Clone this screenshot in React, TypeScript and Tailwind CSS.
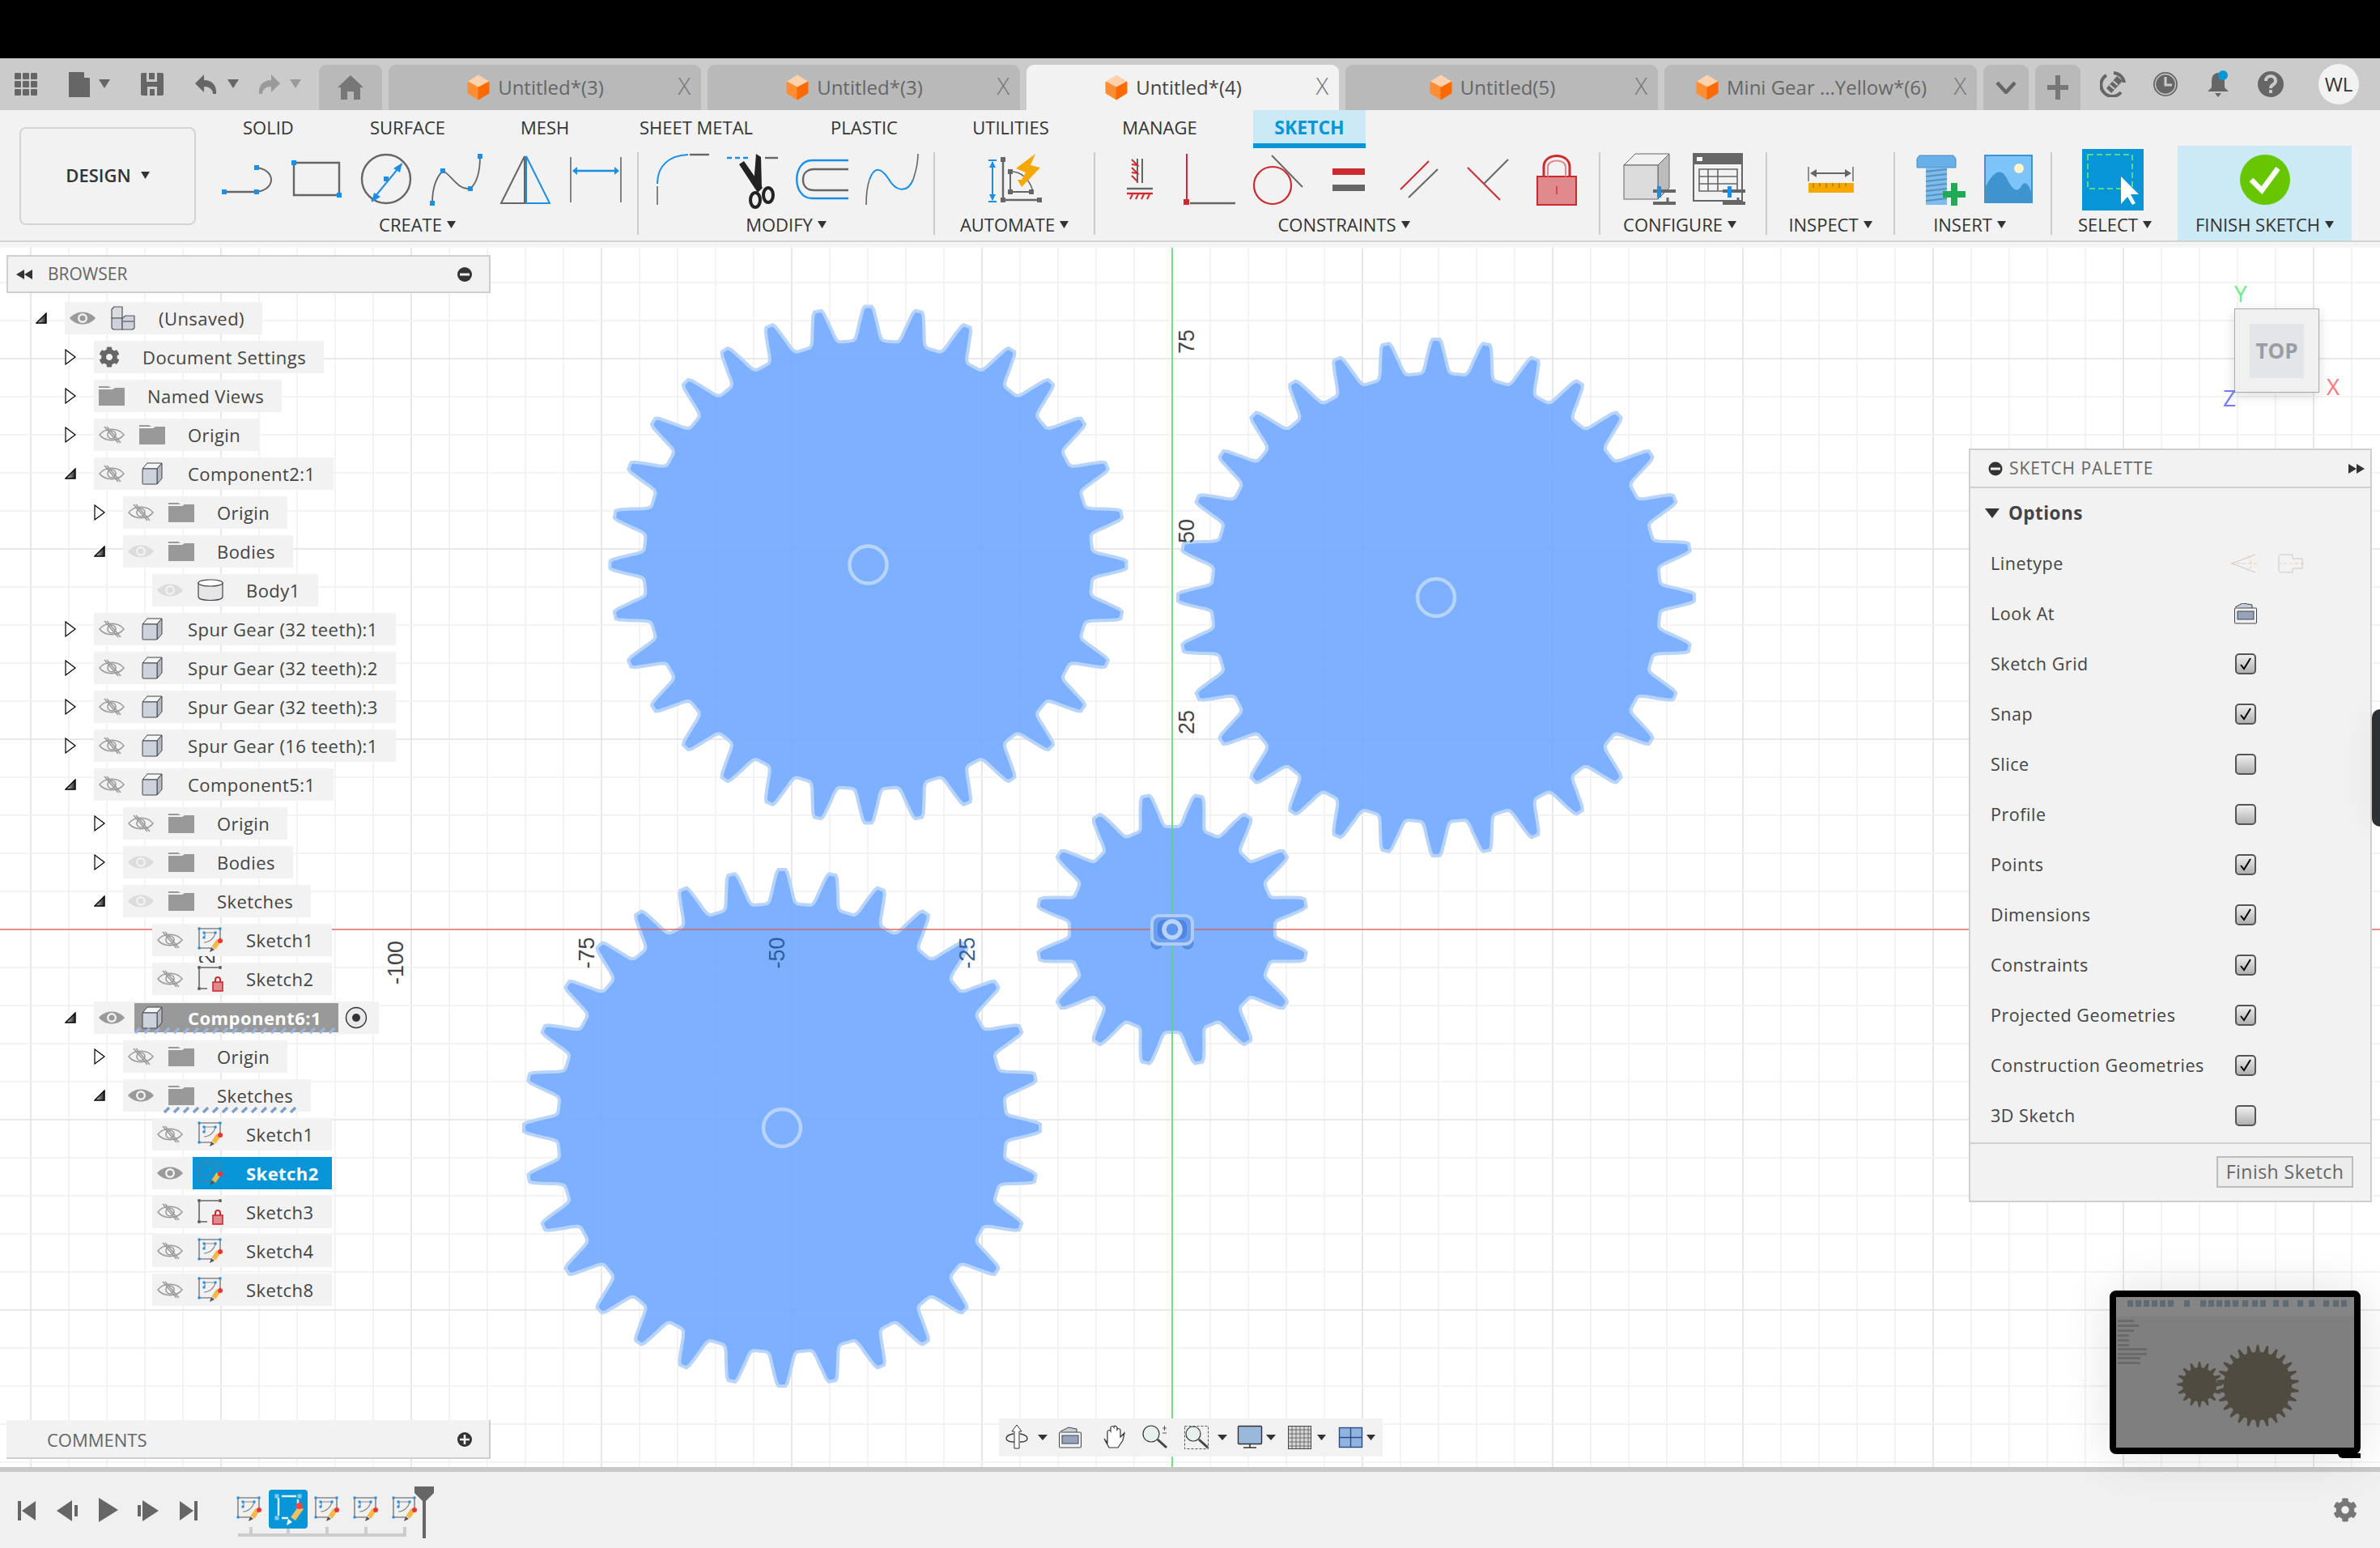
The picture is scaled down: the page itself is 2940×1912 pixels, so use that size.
import React from "react";
import { FaCog } from "react-icons/fa";

const gearPath = (cx: number, cy: number, n: number, rt: number, rr: number, phase: number) => {
  const half: [number, number][] = [[0.07, 1], [0.11, 0.9], [0.16, 0.65], [0.21, 0.4], [0.25, 0.2], [0.29, 0.07], [0.34, 0.012], [0.42, 0]];
  const prof: [number, number][] = [[-0.5, 0], ...[...half].reverse().map(([a, t]) => [-a, t] as [number, number]), ...half];
  const pts: string[] = [];
  for (let i = 0; i < n; i++) {
    for (const [a, t] of prof) {
      const ang = ((i + phase + a) / n) * Math.PI * 2;
      const r = rr + (rt - rr) * t;
      pts.push(`${(cx + r * Math.sin(ang)).toFixed(1)},${(cy - r * Math.cos(ang)).toFixed(1)}`);
    }
  }
  return "M" + pts.join("L") + "Z";
};

const H = ({ x, y, s = 6, c = "#1a8fe8" }: { x: number; y: number; s?: number; c?: string }) => <rect x={x - s / 2} y={y - s / 2} width={s} height={s} fill={c} />;
const G = "#666666";
const B = "#1a8fe8";
const R = "#cc2a2e";

const Caret = ({ cls = "ml-[6px]" }: { cls?: string }) => (
  <svg width="11" height="11" viewBox="0 0 11 11" className={`${cls} shrink-0`}><path d="M0 1h11L5.5 10z" fill="#333" /></svg>
);

const Strip = ({ x, w, children }: { x: number; w: number; children?: React.ReactNode }) => (
  <svg width={w} height={82} viewBox={`${x} 180 ${w} 82`} className="block shrink-0">{children}</svg>
);

const Group = ({ x, w, cls, label, caret = true, lblCls = "", children }: { x: number; w: number; cls: string; label: string; caret?: boolean; lblCls?: string; children?: React.ReactNode }) => (
  <div className={`flex flex-col shrink-0 h-full ${cls}`}>
    <Strip x={x} w={w}>{children}</Strip>
    <div className={`flex items-center justify-center h-[30px] text-[22px] text-[#333] whitespace-nowrap ${lblCls}`}>
      {label}
      {caret && <Caret />}
    </div>
  </div>
);

const Sep = () => <div className="w-[2px] h-[102px] bg-[#cccccc] shrink-0 self-center" />;

const Cube = () => (
  <svg width="30" height="32" viewBox="0 0 28 32" className="shrink-0">
    <path d="M14 1L27 9L14 16L1 9Z" fill="#ffd2ad" stroke="#ffd2ad" strokeLinejoin="round" />
    <path d="M1 9L14 16V31L1 23Z" fill="#ff8d33" stroke="#ff8d33" strokeLinejoin="round" />
    <path d="M27 9L14 16V31L27 23Z" fill="#ff6a00" stroke="#ff6a00" strokeLinejoin="round" />
  </svg>
);

const Tab = ({ label, active }: { label: string; active?: boolean }) => (
  <div className={`relative w-[386px] h-[56px] rounded-t-[9px] flex items-center justify-center gap-[9px] pr-[24px] text-[24px] shrink-0 ${active ? "bg-[#f2f2f2] text-[#444]" : "bg-[#b9b9b9] text-[#666]"}`}>
    <Cube />
    <span className="whitespace-nowrap">{label}</span>
    <span className="absolute right-[13px] top-[9px] text-[29px] font-light text-[#777] leading-[34px]">X</span>
  </div>
);

const SketchGlyph = ({ line = "#888", handle = "#1a8fe8" }: { line?: string; handle?: string }) => (
  <g>
    <path d="M3 2H27M2 3V25M3 26H17M28 3V16" stroke={line} strokeWidth="1.6" fill="none" />
    <H x={2} y={2} s={3} c={handle} /><H x={28} y={2} s={3} c={handle} /><H x={2} y={26} s={3} c={handle} />
    <path d="M9 7H21M9 8V12" stroke={line} strokeWidth="1.2" fill="none" />
    <H x={8} y={7} s={3} c={handle} /><H x={22} y={7} s={3} c={handle} /><H x={8} y={13} s={3} c={handle} />
    <path d="M8 19C15 19 20 14 22 8" stroke={line} strokeWidth="1.2" fill="none" />
    <path d="M26 17L20 26" stroke="#f5b84a" strokeWidth="6" />
    <circle cx="28" cy="17" r="3" fill="#ee3333" />
    <path d="M17 25L21 28L15 31Z" fill="#555" />
  </g>
);

const SketchIcon = () => <svg width="32" height="32" viewBox="0 0 32 32" className="shrink-0"><SketchGlyph /></svg>;

const SelectedSketchIcon = () => (
  <svg width="32" height="32" viewBox="0 0 32 32" className="shrink-0">
    <path d="M3 2H27M2 3V25M3 26H17M28 3V16" stroke="#4a7fa8" strokeWidth="1.6" fill="none" />
    <path d="M9 7H21M9 8V12M8 19C15 19 20 14 22 8" stroke="#4a7fa8" strokeWidth="1.2" fill="none" />
    <path d="M26 17L20 26" stroke="#f5b84a" strokeWidth="6" />
    <circle cx="28" cy="17" r="3" fill="#ee3333" />
    <path d="M17 25L21 28L15 31Z" fill="#555" />
  </svg>
);

const LockSketchIcon = () => (
  <svg width="32" height="32" viewBox="0 0 32 32" className="shrink-0">
    <path d="M4 2H26M2 4V26M4 28H12" stroke="#666" strokeWidth="1.6" fill="none" />
    <H x={2} y={2} s={3.5} c="#555" /><H x={28} y={2} s={3.5} c="#555" /><H x={2} y={28} s={3.5} c="#555" />
    <rect x="19" y="20" width="12" height="11" fill="#e08a8e" stroke="#cc2a2e" strokeWidth="1.6" />
    <path d="M22 20V17A3 3 0 0 1 28 17V20" stroke="#cc2a2e" strokeWidth="2" fill="none" />
  </svg>
);

const Eye = ({ c = "#9a9a9a" }: { c?: string }) => (
  <svg width="32" height="20" viewBox="0 0 32 20" className="shrink-0">
    <path d="M0 10C8 0 24 0 32 10C24 20 8 20 0 10Z" fill={c} />
    <circle cx="16" cy="10" r="6" fill="#f2f2f2" />
    <circle cx="16" cy="10" r="3.6" fill={c} />
  </svg>
);
const EyeOff = () => (
  <svg width="32" height="22" viewBox="0 0 32 22" className="shrink-0" fill="none" stroke="#9a9a9a" strokeWidth="1.6">
    <path d="M1 11C8 2 24 2 31 11C24 20 8 20 1 11Z" />
    <circle cx="16" cy="11" r="5" />
    <path d="M7 1L24 21M10 1L27 21" />
  </svg>
);
const Folder = () => (
  <svg width="32" height="24" viewBox="0 0 32 24" className="shrink-0">
    <path d="M0 0H12L15 2H0Z" fill="#999" />
    <path d="M0 4H17L20 2H32V24H0Z" fill="#999" />
  </svg>
);
const CompCube = () => (
  <svg width="28" height="28" viewBox="0 0 28 28" className="shrink-0" stroke="#444" strokeWidth="1" strokeLinejoin="round">
    <path d="M2 8L8 1H26L20 8Z" fill="#f4f5f7" />
    <path d="M20 8L26 1V20L20 27Z" fill="#b4bac6" />
    <rect x="2" y="8" width="18" height="19" fill="#cdd2dc" rx="1" />
  </svg>
);
const BodyIcon = () => (
  <svg width="32" height="28" viewBox="0 0 32 28" className="shrink-0" stroke="#444" strokeWidth="1.2">
    <path d="M1 5V22C1 28 31 28 31 22V5Z" fill="#e6e6e8" />
    <ellipse cx="16" cy="5" rx="15" ry="4" fill="#ffffff" />
  </svg>
);
const RootIcon = () => (
  <svg width="30" height="30" viewBox="0 0 30 30" className="shrink-0" stroke="#555" strokeWidth="1.2" strokeLinejoin="round">
    <path d="M1 4L4 1H14V15H1Z" fill="#d9dce3" />
    <path d="M1 15H14V29H3L1 27Z" fill="#cdd2dc" />
    <path d="M14 15L18 12H29V27L27 29H14Z" fill="#cdd2dc" />
    <path d="M15 19H28" />
  </svg>
);

const TriOpen = () => (
  <svg width="14" height="14" viewBox="0 0 14 14"><defs><linearGradient id="triG" x1="0" x2="1" y1="0" y2="0"><stop offset="0" stopColor="#ddd" /><stop offset="1" stopColor="#222" /></linearGradient></defs><path d="M1 13L13 1V13Z" fill="url(#triG)" stroke="#000" strokeWidth="1.4" /></svg>
);
const TriClosed = () => (
  <svg width="14" height="20" viewBox="0 0 14 20"><path d="M1 1L13 10L1 19Z" fill="#fff" stroke="#000" strokeWidth="1.2" /></svg>
);

type RowT = { lvl: number; tri?: "o" | "c"; eye?: "on" | "off" | "dim"; icon: React.ReactNode; label: string; hl?: "comp" | "sketch" | "hatch" };

const rows: RowT[] = [
  { lvl: 0, tri: "o", eye: "on", icon: <RootIcon />, label: "(Unsaved)" },
  { lvl: 1, tri: "c", icon: <FaCog className="text-[#666] text-[26px] shrink-0" />, label: "Document Settings" },
  { lvl: 1, tri: "c", icon: <Folder />, label: "Named Views" },
  { lvl: 1, tri: "c", eye: "off", icon: <Folder />, label: "Origin" },
  { lvl: 1, tri: "o", eye: "off", icon: <CompCube />, label: "Component2:1" },
  { lvl: 2, tri: "c", eye: "off", icon: <Folder />, label: "Origin" },
  { lvl: 2, tri: "o", eye: "dim", icon: <Folder />, label: "Bodies" },
  { lvl: 3, eye: "dim", icon: <BodyIcon />, label: "Body1" },
  { lvl: 1, tri: "c", eye: "off", icon: <CompCube />, label: "Spur Gear (32 teeth):1" },
  { lvl: 1, tri: "c", eye: "off", icon: <CompCube />, label: "Spur Gear (32 teeth):2" },
  { lvl: 1, tri: "c", eye: "off", icon: <CompCube />, label: "Spur Gear (32 teeth):3" },
  { lvl: 1, tri: "c", eye: "off", icon: <CompCube />, label: "Spur Gear (16 teeth):1" },
  { lvl: 1, tri: "o", eye: "off", icon: <CompCube />, label: "Component5:1" },
  { lvl: 2, tri: "c", eye: "off", icon: <Folder />, label: "Origin" },
  { lvl: 2, tri: "c", eye: "dim", icon: <Folder />, label: "Bodies" },
  { lvl: 2, tri: "o", eye: "dim", icon: <Folder />, label: "Sketches" },
  { lvl: 3, eye: "off", icon: <SketchIcon />, label: "Sketch1" },
  { lvl: 3, eye: "off", icon: <LockSketchIcon />, label: "Sketch2" },
  { lvl: 1, tri: "o", eye: "on", icon: <CompCube />, label: "Component6:1", hl: "comp" },
  { lvl: 2, tri: "c", eye: "off", icon: <Folder />, label: "Origin" },
  { lvl: 2, tri: "o", eye: "on", icon: <Folder />, label: "Sketches", hl: "hatch" },
  { lvl: 3, eye: "off", icon: <SketchIcon />, label: "Sketch1" },
  { lvl: 3, eye: "on", icon: <SelectedSketchIcon />, label: "Sketch2", hl: "sketch" },
  { lvl: 3, eye: "off", icon: <LockSketchIcon />, label: "Sketch3" },
  { lvl: 3, eye: "off", icon: <SketchIcon />, label: "Sketch4" },
  { lvl: 3, eye: "off", icon: <SketchIcon />, label: "Sketch8" },
];

const lvlCls = ["ml-[44px]", "ml-[80px]", "ml-[116px]", "ml-[152px]"];

const Hatch = ({ w, c }: { w: number; c: string }) => {
  const segs = Array.from({ length: Math.floor(w / 12) }, (_, i) => `M${i * 12 + 1} 7L${i * 12 + 7} 1`).join("");
  return (
    <svg width={w} height="8" viewBox={`0 0 ${w} 8`} className="absolute left-0 bottom-[-2px]">
      <path d={segs} stroke={c} strokeWidth="3.4" fill="none" />
    </svg>
  );
};

const TreeRow = ({ r }: { r: RowT }) => {
  const eye = r.eye === "on" ? <Eye /> : r.eye === "off" ? <EyeOff /> : r.eye === "dim" ? <Eye c="#dcdcdc" /> : null;
  const text = "text-[22px] tracking-[0.02em] whitespace-nowrap";
  const slot = <div className="w-[32px] mr-[18px] flex justify-center shrink-0">{r.icon}</div>;
  let body: React.ReactNode;
  if (r.hl === "comp") {
    body = (
      <>
        <div className="pl-[6px] pr-[12px] shrink-0">{eye}</div>
        <div className="relative flex items-center h-[36px] w-[252px] bg-[#999] pl-[6px]">
          {slot}
          <span className={`${text} font-bold text-white ml-[10px]`}>{r.label}</span>
          <Hatch w={252} c="#9db4dc" />
        </div>
        <svg width="28" height="28" viewBox="0 0 28 28" className="ml-[8px] mr-[14px] shrink-0"><circle cx="14" cy="14" r="12.5" fill="#e8e8ea" stroke="#333" strokeWidth="1.4" /><circle cx="14" cy="14" r="5" fill="#333" /></svg>
      </>
    );
  } else if (r.hl === "sketch") {
    body = (
      <>
        <div className="pl-[6px] pr-[12px] shrink-0">{eye}</div>
        <div className="flex items-center h-full w-[172px] bg-[#0696d7] pl-[6px]">
          {slot}
          <span className={`${text} font-bold text-white ml-[10px]`}>{r.label}</span>
        </div>
      </>
    );
  } else {
    const plain = !r.eye;
    body = (
      <>
        {eye && <div className="pl-[6px] pr-[18px] shrink-0">{eye}</div>}
        {plain ? <div className="pl-[6px] pr-[18px] flex shrink-0">{r.icon}</div> : slot}
        <span className={`${text} text-[#444] ml-[10px] pr-[22px]`}>{r.label}</span>
        {r.hl === "hatch" && <div className="absolute left-[50px] bottom-0"><Hatch w={176} c="#7f9ccc" /></div>}
      </>
    );
  }
  return (
    <div className={`flex items-center h-[40px] ${lvlCls[r.lvl]}`}>
      <div className="w-[36px] flex items-center shrink-0">{r.tri === "o" ? <TriOpen /> : r.tri === "c" ? <TriClosed /> : null}</div>
      <div className="relative flex items-center h-full bg-[#f2f2f2]">{body}</div>
    </div>
  );
};

const PaletteRow = ({ label, check, children }: { label: string; check?: boolean | null; children?: React.ReactNode }) => (
  <div className="flex items-center h-[62px] pl-[25px]">
    <span className="w-[302px] text-[21.5px] tracking-[0.025em] text-[#444] whitespace-nowrap shrink-0">{label}</span>
    {check === true || check === false ? (
      <div className="w-[26px] h-[26px] rounded-[5px] border-2 border-[#555] bg-gradient-to-b from-[#f0f0f0] to-[#b0b0b0] flex items-center justify-center shrink-0">
        {check && <svg width="18" height="18" viewBox="0 0 18 18"><path d="M3 10L7 15L15 2" fill="none" stroke="#000" strokeWidth="2" /></svg>}
      </div>
    ) : children}
  </div>
);

const gridXs = Array.from({ length: 62 }, (_, i) => 38 + 47 * i);
const gridYs = Array.from({ length: 33 }, (_, i) => 302 + 47 * i);

const canvasLabels: [string, number, number, string][] = [
  ["-125", 258, 1189, "#444"], ["-100", 491, 1189, "#444"], ["-75", 727, 1177, "#444"], ["-50", 962, 1177, "#2f5c9e"], ["-25", 1197, 1177, "#3c5f92"], ["75", 1468, 422, "#444"], ["50", 1468, 656, "#444"], ["25", 1468, 892, "#444"],
];

const CanvasArt = () => (
  <svg width="2940" height="1513" viewBox="0 299 2940 1513" className="absolute inset-0 block">
    <rect x="0" y="299" width="2940" height="7" fill="#f6f6f6" />
    {gridXs.map((x) => <line key={x} x1={x} x2={x} y1="306" y2="1812" stroke={(x - 1448) % 235 === 0 ? "#e2e2e2" : "#f1f1f1"} strokeWidth="1.6" />)}
    {gridYs.map((y) => <line key={y} y1={y} y2={y} x1="0" x2="2940" stroke={(y - 1148) % 235 === 0 ? "#e2e2e2" : "#f1f1f1"} strokeWidth="1.6" />)}
    {[[1072.5, 697.5], [1774, 738], [966, 1393]].map(([cx, cy]) => (
      <g key={cx}>
        <path d={gearPath(cx, cy, 32, 319, 277, 0)} fill="#6ba6ff" fillOpacity="0.88" stroke="#b8d4fb" strokeWidth="4" strokeLinejoin="round" />
        <circle cx={cx} cy={cy} r="23" fill="none" stroke="#b8d4fb" strokeWidth="4.5" />
      </g>
    ))}
    <path d={gearPath(1448, 1148, 16, 168, 127, 0.5)} fill="#6ba6ff" fillOpacity="0.88" stroke="#b8d4fb" strokeWidth="4" strokeLinejoin="round" />
    {canvasLabels.map(([t, x, y, c]) => (
      <text key={t} x={x} y={y} transform={`rotate(-90 ${x} ${y})`} textAnchor="middle" dominantBaseline="middle" fontFamily="Liberation Sans, sans-serif" fontSize="27" fill={c}>{t}</text>
    ))}
    <line x1="0" x2="2940" y1="1148" y2="1148" stroke="#e05555" strokeOpacity="0.8" strokeWidth="1.6" />
    <line x1="1448" x2="1448" y1="306" y2="1812" stroke="#4fdc66" strokeOpacity="0.75" strokeWidth="2" />
    <g>
      <circle cx="1429" cy="1165" r="7" fill="#5b8fe4" stroke="#4f7fd0" />
      <circle cx="1467" cy="1165" r="7" fill="#5b8fe4" stroke="#4f7fd0" />
      <rect x="1423" y="1131" width="50" height="35" rx="9" fill="#6a9ef0" stroke="#b0cdf8" strokeWidth="4" />
      <rect x="1430" y="1136" width="36" height="24" rx="8" fill="#4f86e0" />
      <circle cx="1448" cy="1148" r="10" fill="#5d95ee" stroke="#b8d4fb" strokeWidth="5.5" />
    </g>
  </svg>
);

const ThumbArt = () => (
  <svg width="294" height="186" viewBox="2614 1602 294 186" className="block">
    <rect x="2614" y="1602" width="294" height="186" fill="#7f7f7f" />
    <rect x="2614" y="1602" width="294" height="24" fill="#858585" />
    {[2628, 2638, 2648, 2658, 2668, 2678, 2698, 2718, 2728, 2738, 2748, 2758, 2770, 2782, 2792, 2808, 2820, 2838, 2852, 2870, 2882, 2892].map((x) => <rect key={x} x={x} y="1606" width="7" height="8" fill="#5f6b72" />)}
    {[[1630, 20], [1636, 26], [1642, 20], [1648, 14], [1654, 14], [1660, 14], [1665, 36], [1671, 36], [1676, 28], [1682, 28]].map(([y, w], i) => <rect key={i} x="2616" y={y} width={w} height="3" fill="#6a6a6a" />)}
    <path d={gearPath(2717, 1710, 16, 28, 21, 0)} fill="#4f4b40" />
    <path d={gearPath(2789, 1712, 26, 51, 42, 0)} fill="#4f4b40" />
  </svg>
);

const TimelineArt = () => (
  <svg width="560" height="94" viewBox="0 1818 560 94" className="block shrink-0">
    <g fill={G}>
      <rect x="22" y="1854" width="4" height="24" /><path d="M44 1854V1878L27 1866Z" />
      <path d="M70 1866L89 1853V1879Z" /><rect x="92" y="1859" width="4" height="14" />
      <path d="M122 1850V1880L146 1865Z" />
      <rect x="170" y="1859" width="4" height="14" /><path d="M176 1853V1879L196 1866Z" />
      <path d="M222 1854V1878L239 1866Z" /><rect x="240" y="1854" width="4" height="24" />
    </g>
    <g fill="#cccccc">
      <rect x="294" y="1894" width="208" height="4" />
      {[308, 354, 402, 450, 498].map((x) => <rect key={x} x={x} y="1886" width="4" height="10" />)}
    </g>
    {[292, 388, 436, 484].map((x) => <svg key={x} x={x} y="1848" width="32" height="32" viewBox="0 0 32 32"><SketchGlyph /></svg>)}
    <rect x="332" y="1840" width="48" height="48" rx="4" fill="#0696d7" />
    <path d="M344 1850V1872M348 1848H366M368 1852V1864M348 1875H356" stroke="#e6f5fc" strokeWidth="2.4" fill="none" />
    <H x={342} y={1848} s={5} c="#7fcdf2" /><H x={370} y={1848} s={5} c="#7fcdf2" /><H x={342} y={1875} s={5} c="#7fcdf2" />
    <path d="M372 1862L362 1876" stroke="#f5c060" strokeWidth="7" />
    <circle cx="370" cy="1860" r="4" fill="#ee4444" />
    <path d="M356 1876L361 1880L354 1884Z" fill="#fff" />
    <path d="M512 1836H536V1844L526 1854V1900H522V1854L512 1844Z" fill="#666" />
  </svg>
);

export default function App() {
  return (
    <div className="w-[2940px] h-[1912px] flex flex-col overflow-hidden bg-white font-['Open_Sans','Liberation_Sans',sans-serif]">
      <div className="h-[72px] bg-black shrink-0" />

      {/* Title bar */}
      <div className="h-[64px] bg-[#cbcbcb] flex items-end shrink-0">
        <svg width="394" height="64" viewBox="0 72 394 64" className="shrink-0 block">
          <g fill={G}>
            {[18, 28, 38].flatMap((x) => [90, 100, 110].map((y) => <rect key={`${x}-${y}`} x={x} y={y} width="8" height="8" rx="1" />))}
            <path d="M85 89H103L111 97V120H85Z" /><path d="M104 88L111 96H104Z" fill="#cbcbcb" />
            <path d="M122 98H136L129 109Z" />
            <path d="M174 92Q174 90 176 90H200Q202 90 202 92V116Q202 118 200 118H176Q174 118 174 116Z" />
            <rect x="181" y="90" width="13" height="11" fill="#cbcbcb" /><rect x="184" y="90" width="7" height="8" fill={G} />
            <rect x="182" y="107" width="12" height="11" fill="#cbcbcb" /><rect x="185" y="110" width="6" height="8" fill={G} />
            <path d="M241 103L252 92V99C262 99 268 106 267 116H263C263 110 258 107 252 107V114Z" />
            <path d="M281 98H295L288 109Z" />
          </g>
          <g fill="#9a9a9a">
            <path d="M346 103L335 92V99C325 99 319 106 320 116H324C324 110 329 107 335 107V114Z" />
            <path d="M358 98H372L365 109Z" />
          </g>
        </svg>
        <div className="flex items-end gap-[8px]">
          <div className="w-[78px] h-[56px] rounded-t-[9px] bg-[#b9b9b9] flex items-center justify-center shrink-0">
            <svg width="32" height="30" viewBox="0 0 32 30"><path d="M16 0L32 15H28V30H20V20H12V30H4V15H0Z" fill="#777" /></svg>
          </div>
          <Tab label="Untitled*(3)" />
          <Tab label="Untitled*(3)" />
          <Tab label="Untitled*(4)" active />
          <Tab label="Untitled(5)" />
          <Tab label="Mini Gear ...Yellow*(6)" />
          <div className="w-[56px] h-[56px] rounded-t-[9px] bg-[#b9b9b9] flex items-center justify-center shrink-0">
            <svg width="26" height="16" viewBox="0 0 26 16"><path d="M2 2L13 14L24 2" fill="none" stroke="#666" strokeWidth="4.5" /></svg>
          </div>
          <div className="w-[56px] h-[56px] rounded-t-[9px] bg-[#b9b9b9] flex items-center justify-center shrink-0">
            <svg width="26" height="30" viewBox="0 0 26 30"><path d="M13 0V30M0 15H26" stroke="#777" strokeWidth="6" /></svg>
          </div>
        </div>
        <div className="flex items-center self-stretch pl-[24px] gap-[33px]">
          <svg width="32" height="32" viewBox="0 0 32 32"><path d="M8 5A14 14 0 1 0 26 26" fill="none" stroke={G} strokeWidth="4" /><path d="M17 2A14 14 0 0 1 30 14" fill="none" stroke={G} strokeWidth="4" /><path d="M8 21L21 6L28 12L14 27Z" fill={G} /><path d="M12 17L18 22M16 12L22 17" stroke="#cbcbcb" strokeWidth="2" /></svg>
          <svg width="32" height="32" viewBox="0 0 32 32"><circle cx="16" cy="16" r="15" fill={G} /><circle cx="16" cy="16" r="12.5" fill="none" stroke="#cbcbcb" strokeWidth="1.4" /><path d="M16 7V17H24" fill="none" stroke="#cbcbcb" strokeWidth="3" /></svg>
          <svg width="32" height="34" viewBox="0 0 32 34"><path d="M16 3C10 3 8 8 8 14V21L3 26H29L24 21V14C24 8 22 3 16 3Z" fill={G} /><path d="M12 28H20L16 33Z" fill={G} /><circle cx="22" cy="6" r="6" fill="#0696d7" /></svg>
          <svg width="32" height="32" viewBox="0 0 32 32"><circle cx="16" cy="16" r="16" fill={G} /><path d="M10 12C10 4 22 4 22 12C22 17 16 16 16 21" fill="none" stroke="#cbcbcb" strokeWidth="4" /><rect x="14" y="23" width="4" height="4" fill="#cbcbcb" /></svg>
          <div className="w-[50px] h-[50px] ml-[10px] rounded-full bg-[#f2f2f2] flex items-center justify-center text-[24px] text-[#333]">WL</div>
        </div>
      </div>

      {/* Ribbon */}
      <div className="h-[163px] bg-[#f2f2f2] border-b-2 border-[#d2d2d2] flex shrink-0">
        <div className="w-[268px] shrink-0 pl-[24px] pt-[21px]">
          <div className="w-[218px] h-[121px] rounded-[8px] border-2 border-[#d4d4d4] flex items-center justify-center pb-[3px] text-[22px] font-semibold text-[#333]">
            DESIGN<Caret cls="ml-[12px]" />
          </div>
        </div>
        <div className="flex flex-col">
          <div className="h-[44px] flex items-start text-[22px] text-[#333] whitespace-nowrap shrink-0">
            <span className="ml-[32px] w-[62px] text-center leading-[42px]">SOLID</span>
            <span className="ml-[94px] w-[95px] text-center leading-[42px]">SURFACE</span>
            <span className="ml-[92px] w-[57px] text-center leading-[42px]">MESH</span>
            <span className="ml-[88px] w-[144px] text-center leading-[42px]">SHEET METAL</span>
            <span className="ml-[93px] w-[85px] text-center leading-[42px]">PLASTIC</span>
            <span className="ml-[90px] w-[97px] text-center leading-[42px]">UTILITIES</span>
            <span className="ml-[89px] w-[93px] text-center leading-[42px]">MANAGE</span>
            <span className="ml-[69px] w-[139px] h-[47px] text-center leading-[42px] text-[23px] font-bold text-[#0696d7] bg-[#cce9f6] border-b-[6px] border-[#0696d7]">SKETCH</span>
          </div>
          <div className="flex h-[117px]">
            <Group x={268} w={519} cls="w-[519px]" label="CREATE" lblCls="pr-[24px]">
              <path d="M277 237H317" stroke={G} strokeWidth="2.5" /><path d="M317 207C341 210 341 234 317 237" stroke={G} strokeWidth="2" fill="none" />
              <H x={277} y={237} /><H x={317} y={237} /><H x={317} y={207} />
              <path d="M363 201H419V241H363Z" stroke={G} strokeWidth="2.4" fill="none" /><H x={363} y={201} /><H x={419} y={241} />
              <circle cx="477" cy="221" r="30" stroke={G} strokeWidth="2.4" fill="none" /><path d="M459 248L496 203" stroke={B} strokeWidth="2" /><H x={477} y={221} /><path d="M459 250L462 238L470 243Z" fill={B} /><path d="M497 201L494 213L486 208Z" fill={B} />
              <path d="M534 251C534 235 538 220 547 211C556 214 566 236 581 233C590 225 593 210 593 193" stroke={G} strokeWidth="1.8" fill="none" /><H x={534} y={251} /><H x={547} y={211} /><H x={581} y={233} /><H x={593} y={193} />
              <path d="M648 193L619 251H648Z" stroke={G} strokeWidth="2" fill="none" /><path d="M650 193L679 251H650Z" stroke={B} strokeWidth="2" fill="none" />
              <path d="M705 194V250M767 194V250" stroke={G} strokeWidth="1.6" /><path d="M710 211H762" stroke={B} strokeWidth="2.4" /><path d="M707 211L713 206V216ZM765 211L759 206V216Z" fill={B} />
            </Group>
            <Sep />
            <Group x={789} w={364} cls="w-[364px]" label="MODIFY">
              <path d="M812 230V253" stroke={G} strokeWidth="1.6" /><path d="M812 227C812 205 826 192 850 191" stroke={B} strokeWidth="2" fill="none" /><path d="M852 191H876" stroke={G} strokeWidth="2.4" />
              <path d="M898 195H928" stroke={B} strokeWidth="2.4" strokeDasharray="6 4" /><path d="M945 195H961" stroke={G} strokeWidth="2.4" />
              <path d="M913 203L919 199L942 232L936 238Z" fill="#222" /><path d="M934 190L940 194L941 232L931 228Z" fill="#222" />
              <ellipse cx="933" cy="247" rx="6" ry="9" stroke="#222" strokeWidth="4" fill="none" /><ellipse cx="949" cy="241" rx="6" ry="9" stroke="#222" strokeWidth="4" fill="none" />
              <path d="M1048 198H1003C978 198 978 245 1003 245H1048" stroke={B} strokeWidth="2.4" fill="none" /><path d="M1048 209H1006C996 209 992 215 992 222C992 229 996 235 1006 235H1048" stroke={G} strokeWidth="2.4" fill="none" />
              <path d="M1070 253C1070 240 1072 228 1074 222" stroke={G} strokeWidth="1.6" fill="none" /><path d="M1074 222C1080 205 1088 207 1097 220C1106 236 1120 240 1128 222" stroke={B} strokeWidth="2" fill="none" /><path d="M1128 222C1132 210 1134 200 1134 190" stroke={G} strokeWidth="1.6" fill="none" />
            </Group>
            <Sep />
            <Group x={1155} w={196} cls="w-[196px]" label="AUTOMATE">
              <path d="M1226 200V247" stroke={B} strokeWidth="2" /><path d="M1221 198H1231M1221 249H1231" stroke={B} strokeWidth="2" /><path d="M1226 199L1222 207H1230ZM1226 248L1222 240H1230Z" fill={B} />
              <path d="M1239 198V247H1284" stroke={G} strokeWidth="2.4" fill="none" /><H x={1239} y={197} c={G} /><H x={1239} y={247} c={G} /><H x={1284} y={247} c={G} />
              <path d="M1248 214V237H1274" stroke={G} strokeWidth="2" fill="none" /><path d="M1250 212C1262 212 1272 222 1276 236" stroke={G} strokeWidth="1.6" fill="none" /><H x={1248} y={212} c={G} /><H x={1248} y={237} c={G} /><H x={1274} y={237} c={G} />
              <path d="M1279 190L1255 208L1267 213L1262 222L1257 222L1262 231L1285 207L1273 204Z" fill="#f7a800" />
            </Group>
            <Sep />
            <Group x={1353} w={622} cls="w-[622px]" label="CONSTRAINTS" lblCls="pr-[8px]">
              <path d="M1405 196V226M1411 196V226" stroke={G} strokeWidth="2" /><path d="M1398 197L1405 204L1398 203M1398 207L1405 214L1398 213M1398 217L1405 224" stroke={R} strokeWidth="2" fill="none" /><path d="M1392 233H1424" stroke={G} strokeWidth="2.4" /><path d="M1392 239H1424" stroke={R} strokeWidth="2.4" /><path d="M1396 246L1399 240M1403 246L1406 240M1410 246L1413 240M1417 246L1420 240" stroke={R} strokeWidth="2" />
              <path d="M1466 190V247" stroke={R} strokeWidth="2" /><rect x="1462" y="246" width="7" height="7" fill={R} /><path d="M1470 251H1526" stroke={G} strokeWidth="2.4" />
              <circle cx="1572" cy="229" r="23" stroke={R} strokeWidth="2.2" fill="none" /><path d="M1571 192L1609 231" stroke={G} strokeWidth="1.8" />
              <rect x="1646" y="208" width="40" height="8" fill={R} /><rect x="1646" y="228" width="40" height="8" fill={G} />
              <path d="M1730 234L1765 199" stroke={R} strokeWidth="2" /><path d="M1740 244L1776 209" stroke={G} strokeWidth="2" />
              <path d="M1813 207L1853 247" stroke={R} strokeWidth="2" /><path d="M1833 227L1863 197" stroke={G} strokeWidth="2" />
              <rect x="1899" y="218" width="48" height="35" fill="#e08a8e" stroke={R} strokeWidth="2" /><path d="M1907 218V206C1907 188 1939 188 1939 206V218" stroke={R} strokeWidth="3" fill="none" /><path d="M1912 218V206C1912 196 1934 196 1934 206V218" stroke="#e08a8e" strokeWidth="2" fill="none" /><path d="M1923 230V240" stroke={R} strokeWidth="1.4" />
            </Group>
            <Sep />
            <Group x={1977} w={204} cls="w-[204px]" label="CONFIGURE" lblCls="pr-[8px]">
              <path d="M2006 204L2020 190H2062L2048 204Z" fill="#f2f2f2" stroke={G} strokeWidth="1" /><path d="M2048 204L2062 190V232L2048 246Z" fill="#bcbcbc" stroke={G} strokeWidth="1" /><rect x="2006" y="204" width="42" height="42" fill="#dcdcdc" stroke={G} strokeWidth="1" />
              <path d="M2042 236H2070M2042 251H2070" stroke={G} strokeWidth="4" /><rect x="2047" y="230" width="5" height="14" fill={B} /><path d="M2060 244V253" stroke={G} strokeWidth="3" />
              <rect x="2092" y="190" width="60" height="58" fill="none" stroke={G} strokeWidth="2" /><rect x="2092" y="190" width="60" height="13" fill={G} /><rect x="2096" y="194" width="7" height="5" fill="#fff" />
              <path d="M2099 209H2146V236H2099ZM2110 209V236M2122 209V236M2099 218H2146M2099 227H2146" stroke={G} strokeWidth="1.6" fill="#f2f2f2" />
              <path d="M2128 236H2156M2128 251H2156" stroke={G} strokeWidth="4" /><rect x="2134" y="230" width="5" height="14" fill={B} /><path d="M2147 244V253" stroke={G} strokeWidth="3" />
            </Group>
            <Sep />
            <Group x={2183} w={156} cls="w-[156px]" label="INSPECT">
              <path d="M2234 206V224M2289 206V224" stroke={G} strokeWidth="1.4" /><path d="M2238 214H2285" stroke={G} strokeWidth="2" /><path d="M2236 214L2244 209V219ZM2287 214L2279 209V219Z" fill={G} />
              <rect x="2234" y="226" width="56" height="12" fill="#f7a800" /><path d="M2240 226V232M2248 226V230M2256 226V232M2264 226V230M2272 226V232M2280 226V230" stroke="#8a6a10" strokeWidth="1" />
            </Group>
            <Sep />
            <Group x={2341} w={192} cls="w-[192px]" label="INSERT" lblCls="pr-[8px]">
              <path d="M2371 192H2413L2416 196V207H2368V196Z" fill="#67b0e8" stroke="#4a8cc4" strokeWidth="1" /><rect x="2379" y="207" width="26" height="46" fill="#7cbcee" />
              {[212, 218, 224, 230, 236, 242, 248].map((y) => <path key={y} d={`M2379 ${y}L2405 ${y - 3}`} stroke="#5a90ba" strokeWidth="2" />)}
              <path d="M2410 226H2418V236H2428V244H2418V254H2410V244H2400V236H2410Z" fill="#1eab54" />
              <rect x="2452" y="192" width="58" height="58" fill="#7cc4fa" stroke="#3f94d0" strokeWidth="2" /><circle cx="2494" cy="208" r="6" fill="#fff7c8" />
              <path d="M2452 232C2462 212 2472 205 2480 222C2486 234 2492 240 2498 228C2503 222 2508 232 2510 240V250H2452Z" fill="#3f94d0" />
            </Group>
            <Sep />
            <Group x={2535} w={155} cls="w-[155px]" label="SELECT">
              <rect x="2572" y="184" width="76" height="76" fill="#0696d7" />
              <rect x="2579" y="191" width="55" height="42" fill="none" stroke="#5dd68a" strokeWidth="2" strokeDasharray="7 4" />
              <path d="M2620 218V252L2628 243L2634 253L2638 251L2632 240L2642 240Z" fill="#fff" />
            </Group>
            <Group x={2690} w={215} cls="w-[215px] bg-[#cce9f6]" label="FINISH SKETCH">
              <circle cx="2798" cy="222" r="31" fill="#66c700" />
              <path d="M2781 222L2794 235L2814 208" fill="none" stroke="#fff" strokeWidth="6.5" />
            </Group>
          </div>
        </div>
      </div>

      {/* Canvas */}
      <div className="relative flex-1">
        <CanvasArt />

        {/* Left column */}
        <div className="absolute left-0 top-0 bottom-0 flex flex-col">
          <div className="mt-4 ml-2 w-[598px] h-[47px] bg-[#f2f2f2] border-2 border-[#cfcfcf] flex items-center shrink-0">
            <svg width="20" height="14" viewBox="0 0 20 14" className="ml-[10px]"><path d="M0 7L10 1V13ZM10 7L20 1V13Z" fill="#333" /></svg>
            <span className="ml-[19px] text-[21px] text-[#666]">BROWSER</span>
            <svg width="20" height="20" viewBox="0 0 20 20" className="ml-auto mr-[20px]"><circle cx="10" cy="10" r="9" fill="#333" /><rect x="4" y="8.5" width="12" height="3" fill="#f2f2f2" /></svg>
          </div>
          <div className="mt-[11px] flex flex-col gap-2">
            {rows.map((r, i) => <TreeRow key={i} r={r} />)}
          </div>
          <div className="mt-auto mb-[10px] ml-2 w-[598px] h-[48px] bg-[#f2f2f2] border-r-2 border-b-2 border-[#cfcfcf] flex items-center pt-[2px] shrink-0">
            <span className="ml-[50px] text-[22px] text-[#666]">COMMENTS</span>
            <svg width="20" height="20" viewBox="0 0 20 20" className="ml-auto mr-[20px]"><circle cx="10" cy="10" r="9" fill="#333" /><path d="M4 10H16M10 4V16" stroke="#f2f2f2" strokeWidth="2.6" /></svg>
          </div>
        </div>

        {/* View cube */}
        <div className="absolute left-[2760px] top-[82px] w-[105px] h-[104px] bg-[#f0f0f0] border border-[#aaa] shadow-[0_4px_14px_rgba(0,0,0,0.14)] flex items-center justify-center">
          <div className="w-[67px] h-[67px] bg-[#e3e5e9] flex items-center justify-center text-[26px] font-bold text-[#9a9da3]">TOP</div>
        </div>
        <span className="absolute left-[2760px] top-[47px] text-[28px] leading-[32px] text-[#66ee88]">Y</span>
        <span className="absolute left-[2874px] top-[162px] text-[28px] leading-[32px] text-[#ff7777]">X</span>
        <span className="absolute left-[2746px] top-[176px] text-[28px] leading-[32px] text-[#7777ff]">Z</span>

        {/* Sketch palette */}
        <div className="absolute left-[2432px] top-[255px] w-[498px] h-[931px] bg-[#f2f2f2] border-2 border-[#cfcfcf] flex flex-col">
          <div className="h-[47px] border-b-2 border-[#cfcfcf] flex items-center shrink-0">
            <svg width="18" height="18" viewBox="0 0 18 18" className="ml-[22px]"><circle cx="9" cy="9" r="8.5" fill="#333" /><rect x="3" y="7.5" width="12" height="3" fill="#f2f2f2" /></svg>
            <span className="ml-[8px] text-[21px] tracking-[0.045em] text-[#666]">SKETCH PALETTE</span>
            <svg width="20" height="14" viewBox="0 0 20 14" className="ml-auto mr-[7px]"><path d="M0 1L10 7L0 13ZM10 1L20 7L10 13Z" fill="#333" /></svg>
          </div>
          <div className="flex items-center h-[62px] pl-[18px] shrink-0">
            <svg width="18" height="12" viewBox="0 0 18 12"><path d="M0 0H18L9 12Z" fill="#333" /></svg>
            <span className="ml-[11px] text-[22.5px] tracking-[0.02em] font-bold text-[#444]">Options</span>
          </div>
          <PaletteRow label="Linetype">
            <div className="flex items-center gap-[26px] ml-[-5px]">
              <svg width="32" height="24" viewBox="0 0 32 24" fill="none" stroke="#c9c9c9" strokeWidth="1"><path d="M30 1L1 12L30 23" /><path d="M0 12H32M21 2C26 8 26 16 21 22" stroke="#f4c8a8" strokeDasharray="4 3" /></svg>
              <svg width="32" height="24" viewBox="0 0 32 24" fill="none" stroke="#c9c9c9" strokeWidth="1"><path d="M3 1H18V6H30V18H18V23H3L1 21V3Z" /><path d="M0 12H32" stroke="#f4c8a8" strokeDasharray="4 3" /></svg>
            </div>
          </PaletteRow>
          <PaletteRow label="Look At">
            <svg width="28" height="26" viewBox="0 0 28 26" className="ml-[-1px]"><path d="M1 5L10 0L22 2V6" fill="#c6ccd8" stroke="#444" /><rect x="0.5" y="6" width="27" height="19" rx="1" fill="#eef1f6" stroke="#444" /><rect x="4" y="10" width="20" height="10" fill="#97a3bc" stroke="#444" /></svg>
          </PaletteRow>
          <PaletteRow label="Sketch Grid" check={true} />
          <PaletteRow label="Snap" check={true} />
          <PaletteRow label="Slice" check={false} />
          <PaletteRow label="Profile" check={false} />
          <PaletteRow label="Points" check={true} />
          <PaletteRow label="Dimensions" check={true} />
          <PaletteRow label="Constraints" check={true} />
          <PaletteRow label="Projected Geometries" check={true} />
          <PaletteRow label="Construction Geometries" check={true} />
          <PaletteRow label="3D Sketch" check={false} />
          <div className="mt-[2px] flex-1 border-t-2 border-[#cfcfcf] flex justify-end items-start pt-[15px] pr-[21px]">
            <div className="w-[169px] h-[39px] border-2 border-[#bdbdbd] bg-[#ececec] flex items-center justify-center text-[23px] tracking-[0.02em] text-[#666]">Finish Sketch</div>
          </div>
        </div>

        {/* Right edge overlay */}
        <div className="absolute left-[2930px] top-[577px] w-[10px] h-[145px] rounded-l-[16px] bg-[#2e3133] shadow-[0_0_40px_rgba(0,0,0,0.12)]" />

        {/* Navigation bar */}
        <div className="absolute left-[1234px] top-[1453px] w-[474px] h-[47px] bg-[#f2f2f2]">
          <svg width="474" height="47" viewBox="1234 1752 474 47" className="block">
            <g fill="#333">
              {[[1282, 1294], [1504, 1516], [1564, 1576], [1627, 1638], [1688, 1699]].map(([a, b]) => <path key={a} d={`M${a} 1772H${b}L${(a + b) / 2} 1779Z`} />)}
            </g>
            <path d="M1256 1760L1262 1768H1259V1789H1253V1768H1250Z" fill="#fff" stroke="#333" strokeWidth="1" />
            <path d="M1252 1771C1240 1773 1240 1781 1253 1781M1260 1771C1272 1773 1272 1781 1260 1781" fill="none" stroke="#333" strokeWidth="1.4" />
            <path d="M1310 1768L1320 1763L1330 1765V1769" fill="#c6ccd8" stroke="#444" /><rect x="1308.5" y="1769" width="27" height="19" rx="1" fill="#eef1f6" stroke="#444" /><rect x="1312" y="1773" width="20" height="10" fill="#97a3bc" stroke="#444" />
            <path d="M1364 1777L1368 1782V1768Q1370 1765 1372 1768V1763Q1374 1760 1376 1763V1762Q1378 1760 1380 1763V1766Q1382 1763 1384 1766V1775L1389 1770L1387 1779L1381 1788H1370Z" fill="#fff" stroke="#333" strokeWidth="1.2" />
            <circle cx="1422" cy="1771" r="10" fill="#e8f0ee" stroke="#333" strokeWidth="1.2" /><path d="M1430 1778L1441 1788" stroke="#444" strokeWidth="3" /><path d="M1436 1764H1441M1438.5 1761V1767M1436 1770H1441" stroke="#555" strokeWidth="1" />
            <rect x="1463.5" y="1761.5" width="29" height="28" fill="none" stroke="#555" strokeDasharray="3 2" /><circle cx="1474" cy="1771" r="9" fill="#e8f0ee" stroke="#333" strokeWidth="1.2" /><path d="M1481 1778L1492 1788" stroke="#444" strokeWidth="3" />
            <rect x="1529.5" y="1761.5" width="29" height="22" rx="1" fill="#9ab8dc" stroke="#333" strokeWidth="1.4" /><path d="M1536 1788H1552M1544 1784V1788" stroke="#333" strokeWidth="1.6" />
            <rect x="1591.5" y="1761.5" width="28" height="28" fill="#d6d6d6" stroke="#444" />
            {[1596, 1601, 1606, 1611, 1616].map((x) => <path key={x} d={`M${x} 1762V1789`} stroke="#555" strokeWidth="0.8" />)}
            {[1766, 1771, 1776, 1781, 1786].map((y) => <path key={y} d={`M1592 ${y}H1619`} stroke="#555" strokeWidth="0.8" />)}
            <rect x="1654.5" y="1763.5" width="28" height="24" fill="#90b4e0" stroke="#2d4b80" strokeWidth="1.4" /><path d="M1668.5 1764V1787M1655 1775.5H1682" stroke="#2d4b80" strokeWidth="1.4" />
          </svg>
        </div>

        {/* Thumbnail */}
        <div className="absolute left-[2606px] top-[1295px] w-[310px] h-[202px] rounded-[8px] border-8 border-black bg-black shadow-[0_0_60px_rgba(0,0,0,0.12)]">
          <ThumbArt />
          <div className="absolute right-[-8px] bottom-[-13px] w-[28px] h-[6px] rounded-bl-[8px] bg-black" />
        </div>
      </div>

      {/* Timeline */}
      <div className="h-[6px] bg-[#c9c9c9] shrink-0" />
      <div className="h-[94px] bg-[#f0f0f0] flex items-center justify-between shrink-0">
        <TimelineArt />
        <FaCog className="text-[#777] text-[30px] mr-[28px]" />
      </div>
    </div>
  );
}
